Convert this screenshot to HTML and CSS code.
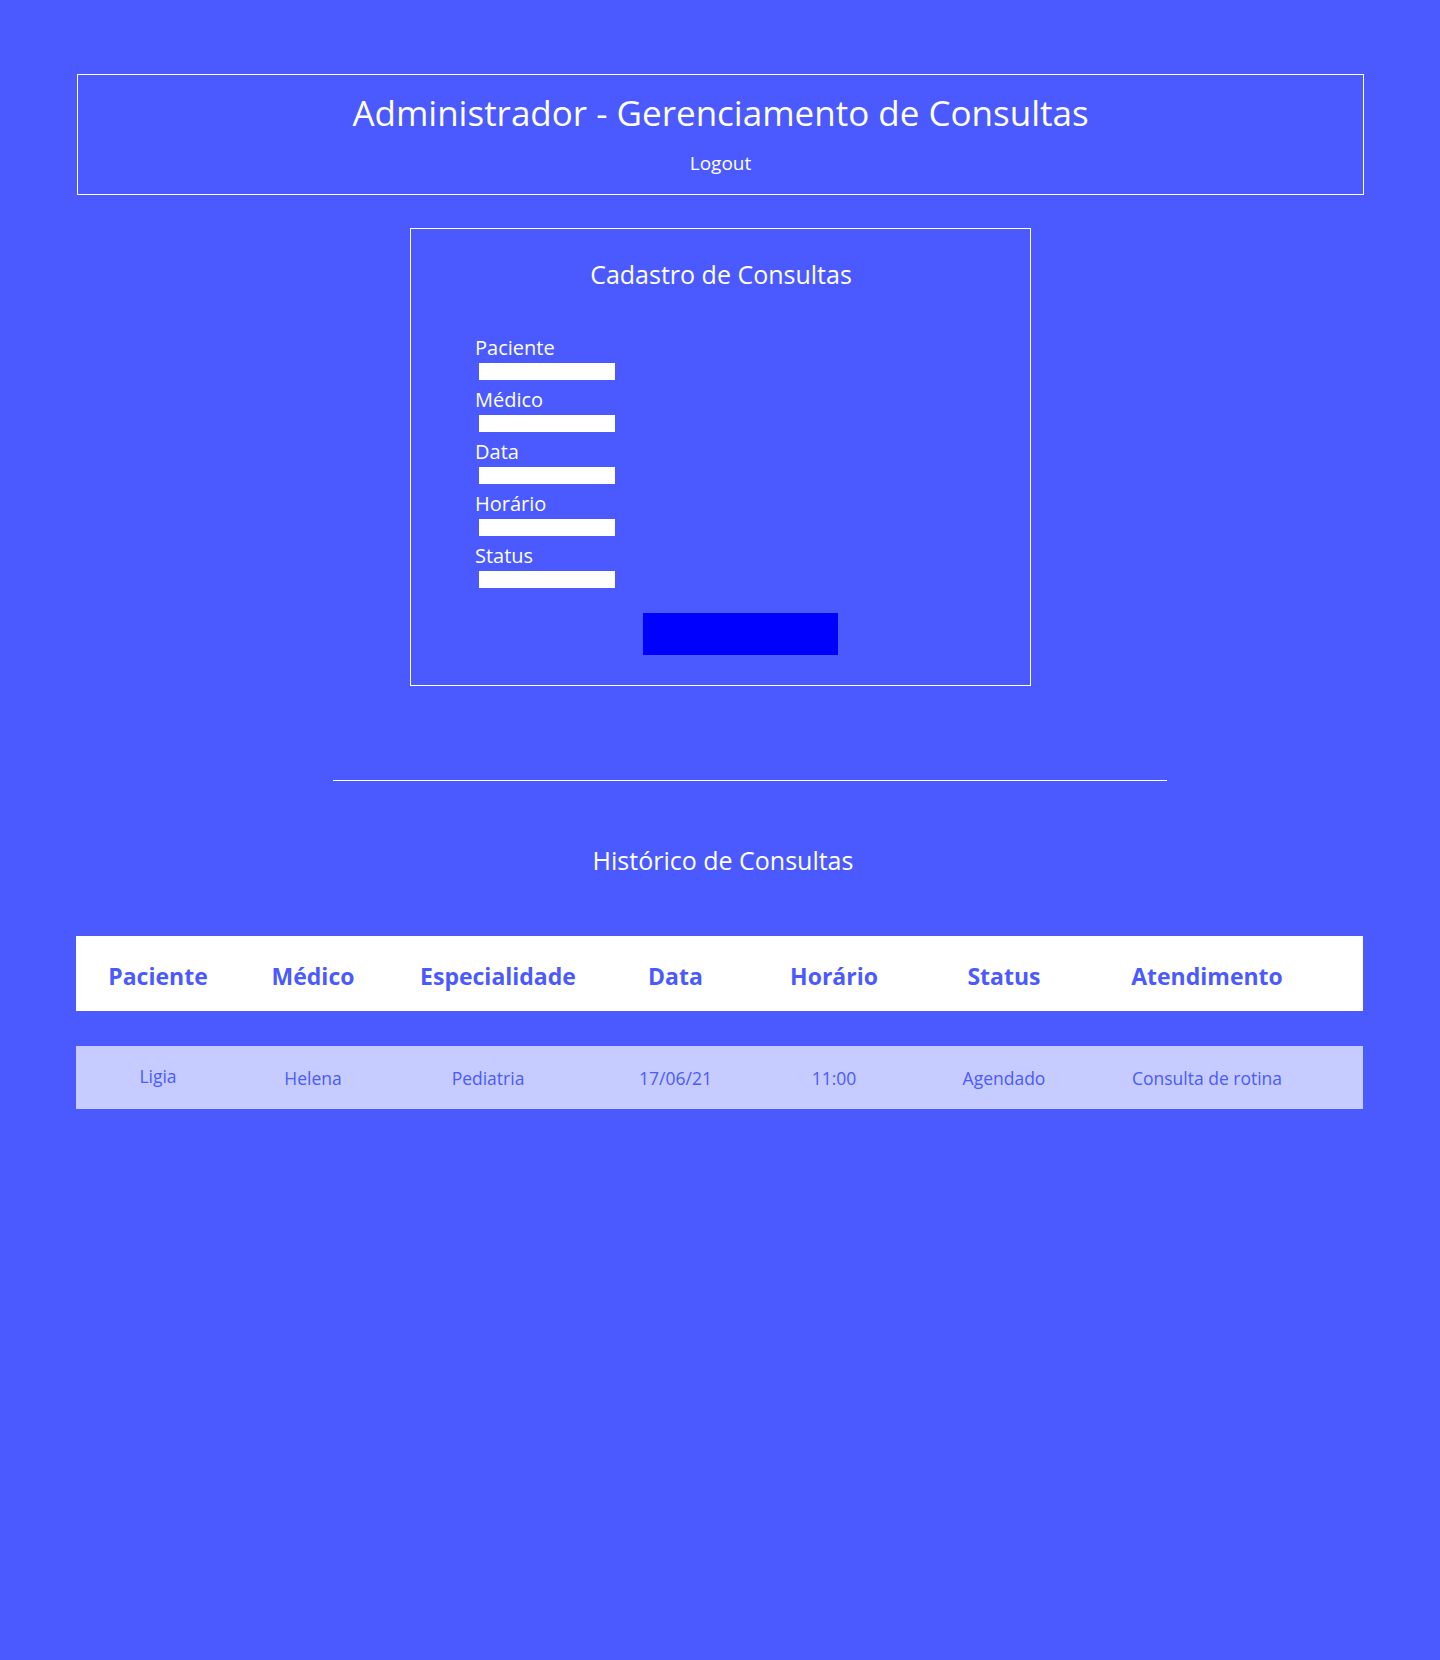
FILE: index.html
```html
<!DOCTYPE html>
<html lang="pt-BR">
<head>
<meta charset="utf-8">
<title>Administrador - Gerenciamento de Consultas</title>
<link rel="stylesheet" href="styles.css">
</head>
<body>
<div class="page">
  <header class="top">
    <h1 class="top-title">Administrador - Gerenciamento de Consultas</h1>
    <a class="logout" href="#">Logout</a>
  </header>

  <form class="cadastro">
    <h2 class="cadastro-title">Cadastro de Consultas</h2>
    <div class="fields">
      <div class="field"><label class="field-label">Paciente</label><input class="field-input" type="text"></div>
      <div class="field"><label class="field-label">Médico</label><input class="field-input" type="text"></div>
      <div class="field"><label class="field-label">Data</label><input class="field-input" type="text"></div>
      <div class="field"><label class="field-label">Horário</label><input class="field-input" type="text"></div>
      <div class="field"><label class="field-label">Status</label><input class="field-input" type="text"></div>
    </div>
    <button class="submit" type="button"></button>
  </form>

  <div class="divider"></div>

  <h2 class="hist-title">Histórico de Consultas</h2>

  <div class="table">
    <div class="row head">
      <div class="cell">Paciente</div>
      <div class="cell">Médico</div>
      <div class="cell">Especialidade</div>
      <div class="cell">Data</div>
      <div class="cell">Horário</div>
      <div class="cell">Status</div>
      <div class="cell">Atendimento</div>
    </div>
    <div class="row data">
      <div class="cell cell-first">Ligia</div>
      <div class="cell">Helena</div>
      <div class="cell cell-esp">Pediatria</div>
      <div class="cell">17/06/21</div>
      <div class="cell">11:00</div>
      <div class="cell">Agendado</div>
      <div class="cell">Consulta de rotina</div>
    </div>
  </div>
</div>
</body>
</html>
```

FILE: styles.css
```css
* { box-sizing: border-box; }

html, body {
  margin: 0;
  padding: 0;
  background: #4a5aff;
}

body {
  font-family: "Open Sans", "Noto Sans", sans-serif;
  color: #ffffff;
  min-height: 1660px;
}

.page {
  padding: 74px 76px 60px 77px;
}

/* Header */
.top {
  border: 1px solid #ffffff;
  padding: 17px 0 19px;
  text-align: center;
}

.top-title {
  margin: 0;
  font-size: 35px;
  line-height: 42px;
  font-weight: 400;
  font-stretch: 88%;
}

.logout {
  display: block;
  margin-top: 18px;
  font-size: 19px;
  line-height: 23px;
  color: #ffffff;
  text-decoration: none;
  font-stretch: 88%;
}

/* Form */
.cadastro {
  width: 621px;
  margin: 33px auto 0;
  border: 1px solid #ffffff;
  padding: 30px 0 30px;
}

.cadastro-title {
  margin: 0;
  padding-left: 1px;
  text-align: center;
  font-size: 25px;
  line-height: 30px;
  font-weight: 400;
  font-stretch: 88%;
}

.fields {
  margin-top: 47px;
  padding-left: 64px;
}

.field {
  display: flex;
  flex-direction: column;
  align-items: flex-start;
}

.field + .field {
  margin-top: 8px;
}

.field-label {
  font-size: 20px;
  line-height: 24px;
  font-stretch: 88%;
}

.field-input {
  margin: 3px 0 0 4px;
  width: 136px;
  height: 17px;
  border: none;
  padding: 0;
  background: #ffffff;
}

.submit {
  display: block;
  margin: 25px 0 0 232px;
  width: 195px;
  height: 42px;
  border: none;
  background: #0000ff;
}

/* Divider */
.divider {
  width: 834px;
  margin: 94px 0 0 256px;
  border-top: 1px solid #ffffff;
}

.hist-title {
  margin: 64px 0 0;
  padding-left: 5px;
  text-align: center;
  font-size: 25px;
  line-height: 30px;
  font-weight: 400;
  font-stretch: 88%;
}

/* Table */
.table {
  margin: 61px 0 0 -1px;
  width: 1287px;
}

.row {
  display: grid;
  grid-template-columns: 164px 146px 224px 131px 186px 154px 252px;
  color: #4a5aff;
  text-align: center;
}

.head {
  background: #ffffff;
  padding: 25px 0 20px;
  font-size: 23px;
  line-height: 30px;
  font-weight: 700;
  font-stretch: 88%;
}

.data {
  margin-top: 35px;
  background: #c6ccff;
  padding: 21px 0 20px;
  font-size: 17.5px;
  line-height: 22px;
  font-stretch: 88%;
}

.cell {
  white-space: nowrap;
}

.cell-first {
  position: relative;
  top: -2px;
}

.cell-esp {
  padding-right: 20px;
}
```
